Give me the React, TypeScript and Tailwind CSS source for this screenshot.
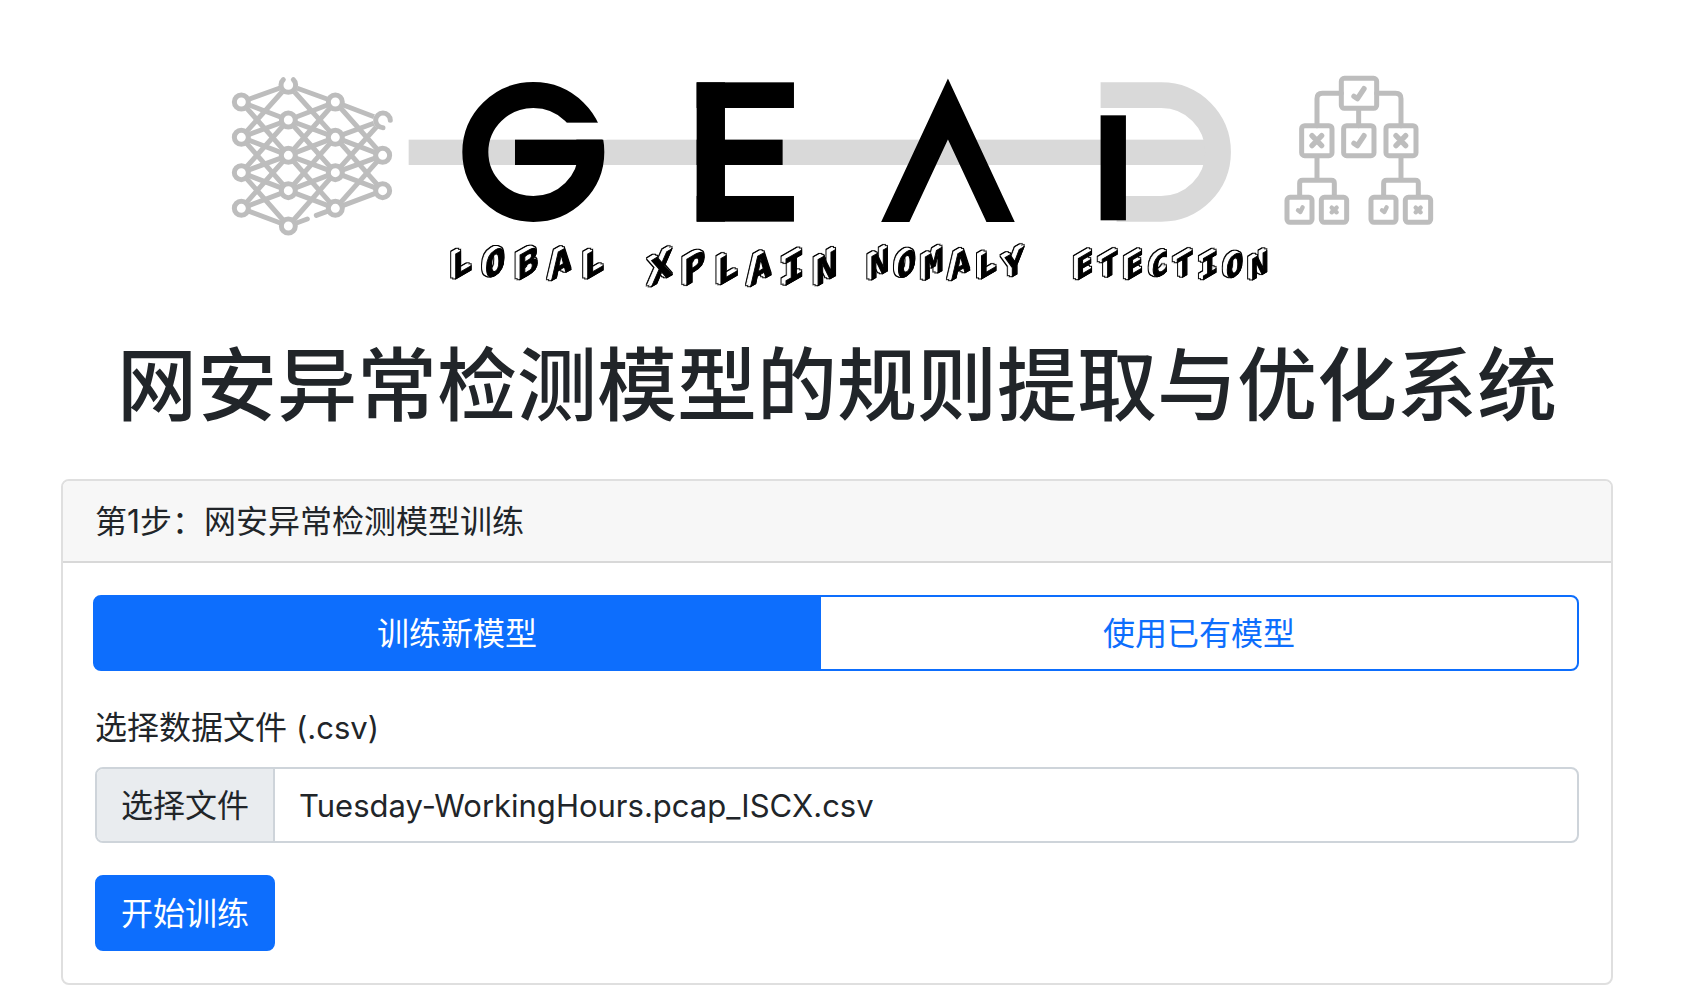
import { useState } from "react";

const INK = "#000";
const SILVER = "#bdbdbd";
const BAND = "#d9d9d9";

type Point = [number, number];

const columns: Point[][] = [
  [[64, 111], [64, 217], [64, 323], [64, 430]],
  [[205, 60], [205, 165], [205, 271], [205, 377], [205, 483]],
  [[346, 111], [346, 217], [346, 323], [346, 430]],
  [[488, 165], [488, 271], [488, 377]],
];

const edges = columns.slice(0, -1).flatMap((column, i) =>
  column.flatMap((from) =>
    columns[i + 1]
      .filter((to) => Math.abs(to[1] - from[1]) < 170)
      .map((to) => [from, to] as [Point, Point]),
  ),
).filter(([a, b]) => !(a[1] === 483 && b[1] === 430));

function NetworkMark() {
  return (
    <g transform="translate(220 65) scale(0.3333)" stroke={SILVER} strokeWidth="15" strokeLinecap="round" fill="none">
      {edges.map(([a, b], i) => (
        <line key={i} x1={a[0]} y1={a[1]} x2={b[0]} y2={b[1]} />
      ))}
      <path d="M205 483L262 462M289 451L346 430" />
      {columns.flat().map(([x, y]) => {
        const open = y === 60 || (x === 488 && y === 165);
        return <circle key={`${x}-${y}`} cx={x} cy={y} r="21" fill="#fff" stroke={open ? "#fff" : SILVER} />;
      })}
      <path d="M190 44a22 22 0 1 0 30 0M511 166a22 22 0 1 0-22 22" />
    </g>
  );
}

function Leaf({ x }: { x: number }) {
  return (
    <g transform={`translate(${x} 0)`}>
      <path d="M141 278V345M89 391V355q0-9 9-9H184q9 0 9 9V391" />
      <rect x="51" y="397" width="75" height="75" rx="9" />
      <rect x="154" y="397" width="76" height="75" rx="9" />
      <g strokeWidth="13">
        <path d="M84 436l7 5l7-14M185 428l15 14M200 428l-15 14" />
      </g>
    </g>
  );
}

function TreeMark() {
  return (
    <g transform="translate(1270 65) scale(0.3333)" stroke={SILVER} strokeWidth="15" strokeLinecap="round" strokeLinejoin="round" fill="none">
      <path d="M214 85H157q-16 0-16 16V182M320 85H377q16 0 16 16V182M266 131V182" />
      <rect x="214" y="40" width="106" height="90" rx="9" />
      <rect x="95" y="182" width="91" height="90" rx="9" />
      <rect x="221" y="182" width="91" height="90" rx="9" />
      <rect x="348" y="182" width="90" height="90" rx="9" />
      <g strokeWidth="16">
        <path d="M252 94l10 7l20-30M252 235l10 7l20-30" />
        <path d="M126 212l29 30M155 212l-29 30M378 212l29 30M407 212l-29 30" />
      </g>
      <Leaf x={0} />
      <Leaf x={252} />
    </g>
  );
}

function Emblem() {
  return (
    <g transform="translate(400 65) scale(0.3333)">
      <rect x="26" y="224" width="2400" height="76" fill={BAND} />
      <path d="M2102 90.5H2284a170.5 170.5 0 0 1 0 341H2150" fill="none" stroke={BAND} strokeWidth="77" />
      <ellipse cx="400" cy="261" rx="174" ry="171" fill="none" stroke={INK} strokeWidth="78" />
      <rect x="480" y="173" width="140" height="51" fill="#fff" />
      <rect x="345" y="224" width="262" height="76" fill={INK} />
      <g fill={INK}>
        <rect x="890" y="52" width="85" height="418" />
        <rect x="890" y="52" width="292" height="77" />
        <rect x="890" y="224" width="258" height="76" />
        <rect x="890" y="393" width="292" height="77" />
      </g>
      <g clipPath="url(#ground)">
        <polyline points="1466,514 1644,132 1822,514" fill="none" stroke={INK} strokeWidth="77" />
      </g>
      <rect x="2102" y="151" width="76" height="315" fill={INK} />
    </g>
  );
}

const SLOPE = Math.tan(Math.PI / 6);

const words = [
  { text: "LOBAL", x: 452, y: 281, pitch: 33, size: 34 },
  { text: "XPLAIN", x: 651, y: 287, pitch: 33, size: 36 },
  { text: "NOMALY", x: 870, y: 281, pitch: 27, size: 32 },
  { text: "ETECTION", x: 1076, y: 281, pitch: 25, size: 29 },
];

function BlockWord({ text, x, y, pitch, size }: (typeof words)[number]) {
  const xs = text.split("").map((_, i) => i * pitch);
  return (
    <g filter="url(#block)">
      <g transform={`translate(${x} ${y}) skewY(-30)`}>
        <text
          x={xs.join(" ")}
          y={xs.map((v) => v * SLOPE).join(" ")}
          fontSize={size}
          fill={INK}
          stroke={INK}
          strokeWidth="1"
          className="font-['DejaVu_Sans_Mono',monospace] font-bold"
        >
          {text}
        </text>
      </g>
    </g>
  );
}

function Logo() {
  return (
    <svg viewBox="61 64 1552 239" className="block w-full" role="img" aria-label="GEAD">
      <defs>
        <clipPath id="ground">
          <rect x="1400" y="0" width="500" height="471" />
        </clipPath>
        <filter id="block" x="-10%" y="-30%" width="120%" height="160%" colorInterpolationFilters="sRGB">
          <feOffset in="SourceAlpha" dx="-1" dy="-1" result="a" />
          <feOffset in="SourceAlpha" dx="-2" dy="-1" result="b" />
          <feOffset in="SourceAlpha" dx="-3" dy="-2" result="c" />
          <feOffset in="SourceAlpha" dx="-4" dy="-2" result="d" />
          <feMerge result="solid">
            <feMergeNode in="a" />
            <feMergeNode in="b" />
            <feMergeNode in="c" />
            <feMergeNode in="d" />
          </feMerge>
          <feMorphology in="solid" operator="dilate" radius="1" result="edge" />
          <feFlood floodColor="#fff" />
          <feComposite in2="solid" operator="in" result="face" />
          <feMerge>
            <feMergeNode in="edge" />
            <feMergeNode in="face" />
            <feMergeNode in="SourceGraphic" />
          </feMerge>
        </filter>
      </defs>
      <NetworkMark />
      <Emblem />
      <TreeMark />
      {words.map((word) => (
        <BlockWord key={word.text} {...word} />
      ))}
    </svg>
  );
}

const modes = ["训练新模型", "使用已有模型"];

export default function App() {
  const [mode, setMode] = useState(0);
  const [fileName, setFileName] = useState("Tuesday-WorkingHours.pcap_ISCX.csv");

  return (
    <main className="min-h-screen bg-white pt-16 pr-[83px] pb-4 pl-[61px] font-[Inter,'Noto_Sans_CJK_SC',sans-serif] text-[32px] leading-[48px] text-[#212529]">
      <Logo />
      <h1 className="mt-[34px] mb-[46px] text-center text-[80px] leading-[96px] font-medium whitespace-nowrap">
        网安异常检测模型的规则提取与优化系统
      </h1>

      <section className="rounded-lg border-2 border-[#dfdfdf] bg-white">
        <h2 className="rounded-t-md border-b-2 border-[#d8d8d8] bg-[#f7f7f7] px-8 pt-[17px] pb-[15px]">
          第1步：网安异常检测模型训练
        </h2>
        <form className="p-8" onSubmit={(e) => e.preventDefault()}>
          <div className="mb-[33px] flex" role="group">
            {modes.map((label, i) => (
              <button
                key={label}
                type="button"
                aria-pressed={mode === i}
                onClick={() => setMode(i)}
                className={`-ml-0.5 flex-auto border-2 border-[#0d6efd] px-6 pt-[13px] pb-[11px] first:rounded-l-lg last:rounded-r-lg ${
                  mode === i ? "bg-[#0d6efd] text-white" : "bg-white text-[#0d6efd]"
                }`}
              >
                {label}
              </button>
            ))}
          </div>

          <label htmlFor="data-file" className="mb-[15px] block">
            选择数据文件 <span className="text-[31px]">(.csv)</span>
          </label>
          <div className="relative mb-8">
            <input
              id="data-file"
              type="file"
              accept=".csv"
              className="peer sr-only"
              onChange={(e) => setFileName(e.target.files?.[0]?.name ?? fileName)}
            />
            <label
              htmlFor="data-file"
              className="flex cursor-pointer overflow-hidden rounded-lg border-2 border-[#ced4da] peer-focus-visible:border-[#86b7fe]"
            >
              <span className="border-r-2 border-[#ced4da] bg-[#e9ecef] px-6 pt-[13px] pb-[11px]">选择文件</span>
              <span className="px-6 pt-[13px] pb-[11px] text-[31px]">{fileName}</span>
            </label>
          </div>

          <button type="submit" className="block rounded-lg border-2 border-[#0d6efd] bg-[#0d6efd] px-6 pt-[13px] pb-[11px] text-white">
            开始训练
          </button>
        </form>
      </section>
    </main>
  );
}
